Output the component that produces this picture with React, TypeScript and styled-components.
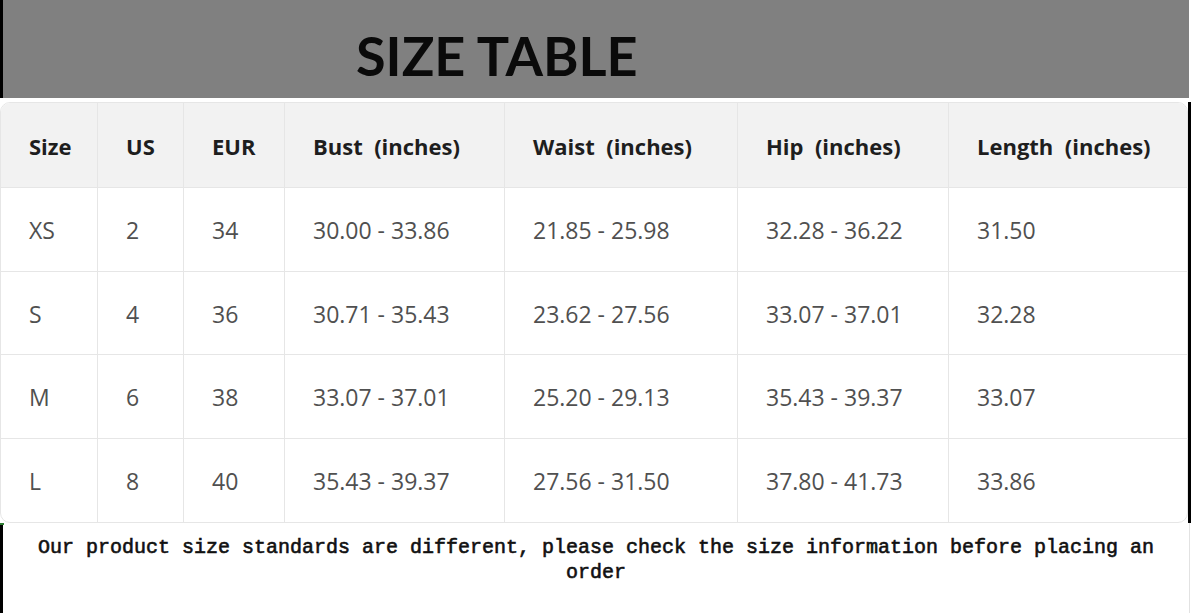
import React from "react";
import styled, { createGlobalStyle } from "styled-components";

const GlobalStyle = createGlobalStyle`
  *, *::before, *::after { box-sizing: border-box; }
  html, body { margin: 0; padding: 0; background: #ffffff; }
  body { width: 1192px; height: 613px; overflow: hidden; font-family: "Open Sans", "Noto Sans", sans-serif; }
`;

const Page = styled.div`
  width: 1192px;
  display: flex;
  flex-direction: column;
`;

const TitleBar = styled.header`
  width: 1189px;
  height: 98px;
  background: #808080;
  border-left: 3px solid #000000;
  display: flex;
  align-items: center;
  padding-left: 353px;
`;

const Title = styled.h1`
  margin: 0;
  font-family: "Lato", "Noto Sans", sans-serif;
  font-weight: 700;
  font-size: 54px;
  line-height: 1;
  color: #0a0a0a;
  letter-spacing: 0;
  padding-top: 13px;
`;

const TableSection = styled.section`
  width: 1191px;
  margin-top: 4px;
  border-right: 3px solid #000000;
`;

const Card = styled.div`
  border: 1px solid #e6e6e6;
  border-radius: 10px;
  overflow: hidden;
  background: #ffffff;
`;

const Table = styled.table`
  width: 100%;
  border-collapse: separate;
  border-spacing: 0;
  table-layout: fixed;
`;

const HeadCell = styled.th`
  height: 85px;
  padding: 2px 0 0 28px;
  text-align: left;
  background: #f2f2f2;
  color: #1e1e1e;
  font-size: 22px;
  font-weight: 700;
  white-space: pre;
  border-bottom: 1px solid #e6e6e6;
  border-right: 1px solid #e6e6e6;
  &:last-child { border-right: none; }
`;

const Cell = styled.td`
  height: 83.5px;
  padding: 2px 0 0 28px;
  color: #505050;
  font-size: 23px;
  font-weight: 400;
  white-space: nowrap;
  border-bottom: 1px solid #e6e6e6;
  border-right: 1px solid #e6e6e6;
  &:last-child { border-right: none; }
  tr:last-child > & { border-bottom: none; }
`;

const Note = styled.footer`
  width: 1190px;
  flex: 1;
  min-height: 90px;
  border-left: 3px solid #000000;
  border-right: 1px solid #e2e2e2;
  padding: 12px 20px 0;
  text-align: center;
  font-family: "Liberation Mono", "Courier New", monospace;
  font-weight: 400;
  -webkit-text-stroke: 0.6px #111111;
  font-size: 20px;
  line-height: 25px;
  color: #111111;
  position: relative;
  &::before {
    content: "";
    position: absolute;
    left: -3px;
    top: 0;
    width: 4px;
    height: 2px;
    background: #2e7d32;
  }
`;

const widths = [97, 86, 101, 220, 233, 211, 240];
const headers = ["Size", "US", "EUR", "Bust  (inches)", "Waist  (inches)", "Hip  (inches)", "Length  (inches)"];
const rows = [
  ["XS", "2", "34", "30.00 - 33.86", "21.85 - 25.98", "32.28 - 36.22", "31.50"],
  ["S", "4", "36", "30.71 - 35.43", "23.62 - 27.56", "33.07 - 37.01", "32.28"],
  ["M", "6", "38", "33.07 - 37.01", "25.20 - 29.13", "35.43 - 39.37", "33.07"],
  ["L", "8", "40", "35.43 - 39.37", "27.56 - 31.50", "37.80 - 41.73", "33.86"],
];

export default function App() {
  return (
    <Page>
      <GlobalStyle />
      <TitleBar>
        <Title>SIZE TABLE</Title>
      </TitleBar>
      <TableSection>
        <Card>
          <Table>
            <colgroup>
              {widths.map((w, i) => (
                <col key={i} style={{ width: w }} />
              ))}
            </colgroup>
            <thead>
              <tr>
                {headers.map((h) => (
                  <HeadCell key={h}>{h}</HeadCell>
                ))}
              </tr>
            </thead>
            <tbody>
              {rows.map((r) => (
                <tr key={r[0]}>
                  {r.map((c, i) => (
                    <Cell key={i}>{c}</Cell>
                  ))}
                </tr>
              ))}
            </tbody>
          </Table>
        </Card>
      </TableSection>
      <Note>
        Our product size standards are different, please check the size information before placing an order
      </Note>
    </Page>
  );
}
